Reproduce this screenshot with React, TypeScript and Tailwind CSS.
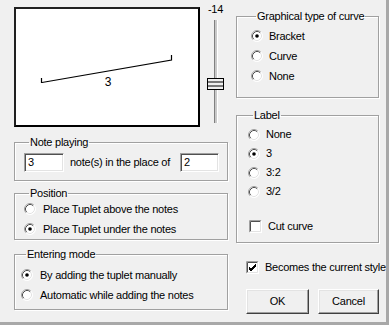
import React from "react";

function Radio({ checked }: { checked?: boolean }) {
  return (
    <svg width="12" height="12" viewBox="0 0 12 12" className="shrink-0">
      <circle cx="6" cy="6" r="5.5" fill="#ffffff" />
      <path d="M2.11 9.89 A5.5 5.5 0 0 1 9.89 2.11" fill="none" stroke="#a0a0a0" strokeWidth="1" />
      <path d="M2.82 9.18 A4.5 4.5 0 0 1 9.18 2.82" fill="none" stroke="#505050" strokeWidth="1" />
      <path d="M9.89 2.11 A5.5 5.5 0 0 1 2.11 9.89" fill="none" stroke="#ffffff" strokeWidth="1" />
      <path d="M9.18 2.82 A4.5 4.5 0 0 1 2.82 9.18" fill="none" stroke="#e3e3e3" strokeWidth="1" />
      {checked && <circle cx="6" cy="6" r="1.8" fill="#000000" />}
    </svg>
  );
}

function Check({ checked }: { checked?: boolean }) {
  return (
    <svg width="13" height="13" viewBox="0 0 13 13" className="shrink-0">
      <rect x="0" y="0" width="13" height="13" fill="#ffffff" />
      <path d="M0.5 12.5 V0.5 H12.5" fill="none" stroke="#a0a0a0" />
      <path d="M1.5 11.5 V1.5 H11.5" fill="none" stroke="#505050" />
      <path d="M0.5 12.5 H12.5 V0.5" fill="none" stroke="#ffffff" />
      <path d="M1.5 11.5 H11.5 V1.5" fill="none" stroke="#e3e3e3" />
      {checked && (
        <path d="M3 6 L5 8 L10 3 M3 7 L5 9 L10 4 M3 8 L5 10 L10 5" fill="none" stroke="#000000" strokeWidth="1" />
      )}
    </svg>
  );
}

function Option({ checked, label, gap }: { checked?: boolean; label: string; gap: string }) {
  return (
    <div className={`flex items-center h-[18px] ${gap}`}>
      <Radio checked={checked} />
      <span>{label}</span>
    </div>
  );
}

const groupCls =
  "border border-[#a0a0a0] shadow-[inset_1px_1px_0_#ffffff,1px_1px_0_#ffffff] min-w-0";
const legendCls = "ml-[5px] px-[1px] leading-[14px]";

function Button({ children, cls }: { children: React.ReactNode; cls: string }) {
  return (
    <button
      className={`h-[25px] text-center bg-[#f0f0f0] border border-t-white border-l-white border-b-[#404040] border-r-[#404040] shadow-[inset_-1px_-1px_0_#a0a0a0,inset_1px_1px_0_#e3e3e3] ${cls}`}
    >
      {children}
    </button>
  );
}

function Input({ value, cls }: { value: string; cls: string }) {
  return (
    <div
      className={`h-[19px] bg-white border border-t-[#a0a0a0] border-l-[#a0a0a0] border-b-white border-r-white shadow-[inset_1px_1px_0_#505050,inset_-1px_-1px_0_#e3e3e3] flex items-center pl-[3px] ${cls}`}
    >
      {value}
    </div>
  );
}

export default function App() {
  return (
    <div
      className="w-[389px] h-[325px] bg-[#f0f0f0] text-black text-[11px] tracking-[-0.25px] overflow-hidden border-r-[3px] border-b-[3px] border-r-[#a8a8a8] border-b-[#a8a8a8]"
      style={{ fontFamily: '"Liberation Sans", Arial, sans-serif' }}
    >
      <div className="flex pl-[14px]">
        {/* Left column */}
        <div className="w-[214px] flex flex-col">
          <div className="flex items-start">
            <div className="mt-[7px] w-[186px] h-[120px] bg-white border-2 border-t-[#202020] border-l-[#202020] border-b-[#000000] border-r-[#000000]">
              <svg width="182" height="116" viewBox="0 0 182 116">
                <path d="M25.5 69 V73.5 H26 L155.5 51 V46" fill="none" stroke="#000" strokeWidth="1.2" />
                <text x="92" y="77" fontSize="12" fontFamily="Liberation Sans, Arial, sans-serif" textAnchor="middle" fill="#000">
                  3
                </text>
              </svg>
            </div>
            <div className="ml-[7px] w-[17px] flex flex-col items-center">
              <div className="mt-[3px] leading-[13px] h-[13px]">-14</div>
              <div className="relative mt-[4px] h-[103px] w-[17px] flex justify-center">
                <div className="w-[4px] h-full bg-[#c8c8c8] border-l border-l-[#808080] border-r border-r-white" />
                <svg width="17" height="12" viewBox="0 0 17 12" className="absolute left-0 top-[58px]">
                  <rect x="0.5" y="0.5" width="16" height="11" fill="#f0f0f0" stroke="#000" />
                  <path d="M1 4 H16 M1 8 H16" stroke="#000" />
                </svg>
              </div>
            </div>
          </div>

          <fieldset className={`${groupCls} mt-[8px] pl-[9px] pr-[8px] pt-[4px] pb-[8px]`}>
            <legend className={legendCls}>Note playing</legend>
            <div className="flex items-center">
              <Input value="3" cls="w-[40px]" />
              <span className="ml-[6px]">note(s) in the place of</span>
              <Input value="2" cls="w-[39px] ml-auto" />
            </div>
          </fieldset>

          <fieldset className={`${groupCls} mt-[5px] pl-[9px] pt-0 pb-[1px] flex flex-col gap-[2px]`}>
            <legend className={legendCls}>Position</legend>
            <Option label="Place Tuplet above the notes" gap="gap-[7px]" />
            <Option checked label="Place Tuplet under the notes" gap="gap-[7px]" />
          </fieldset>

          <fieldset className={`${groupCls} mt-[7px] pl-[6px] pt-[5px] pb-[5px] flex flex-col gap-[2px]`}>
            <legend className={legendCls}>Entering mode</legend>
            <Option checked label="By adding the tuplet manually" gap="gap-[7px]" />
            <Option label="Automatic while adding the notes" gap="gap-[7px]" />
          </fieldset>
        </div>

        {/* Right column */}
        <div className="ml-[8px] w-[143px] flex flex-col">
          <fieldset className={`${groupCls} mt-[9px] pl-[14px] pt-[4px] pb-[12px] flex flex-col gap-[2px]`}>
            <legend className={legendCls}>Graphical type of curve</legend>
            <Option checked label="Bracket" gap="gap-[6px]" />
            <Option label="Curve" gap="gap-[6px]" />
            <Option label="None" gap="gap-[6px]" />
          </fieldset>

          <fieldset className={`${groupCls} mt-[10px] pl-[11px] pt-[3px] pb-[7px] flex flex-col`}>
            <legend className={legendCls}>Label</legend>
            <div className="flex flex-col">
              <div className="h-[19px] flex items-center gap-[6px]">
                <Radio />
                <span>None</span>
              </div>
              <div className="h-[19px] flex items-center gap-[6px]">
                <Radio checked />
                <span>3</span>
              </div>
              <div className="h-[19px] flex items-center gap-[6px]">
                <Radio />
                <span>3:2</span>
              </div>
              <div className="h-[19px] flex items-center gap-[6px]">
                <Radio />
                <span>3/2</span>
              </div>
            </div>
            <div className="mt-[16px] h-[18px] flex items-center gap-[6px] pl-[1px]">
              <Check />
              <span>Cut curve</span>
            </div>
          </fieldset>

          <div className="mt-[15px] h-[18px] flex items-center gap-[6px] pl-[10px] whitespace-nowrap">
            <Check checked />
            <span>Becomes the current style</span>
          </div>

          <div className="mt-[13px] flex pl-[10px] gap-[9px]">
            <Button cls="w-[65px]">OK</Button>
            <Button cls="w-[63px]">Cancel</Button>
          </div>
        </div>
      </div>
    </div>
  );
}
